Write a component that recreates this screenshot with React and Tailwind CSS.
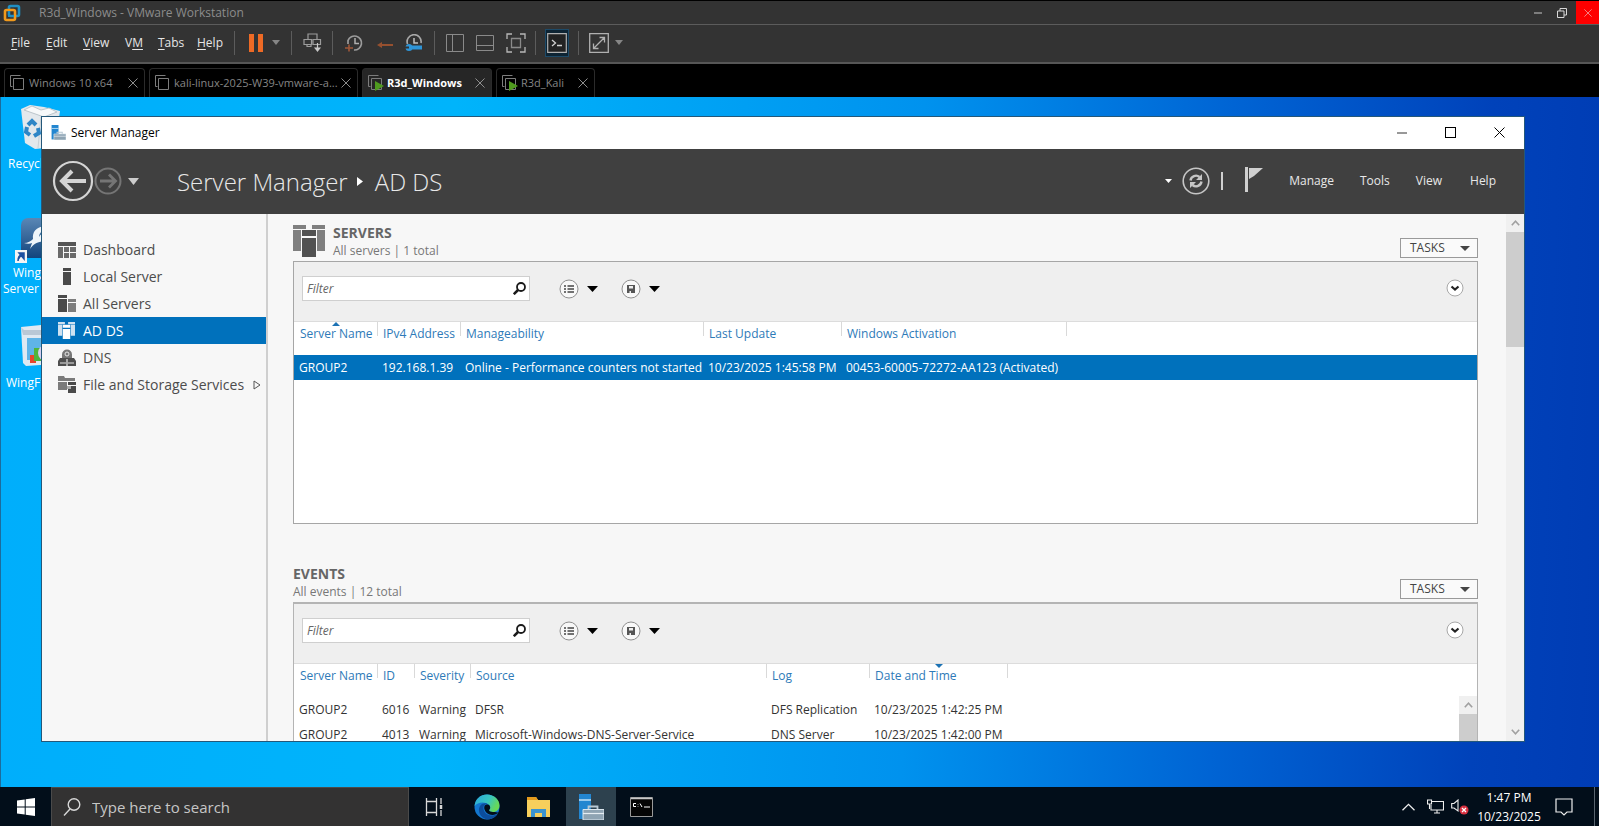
import React from 'react';

const vmMenus = [
  { id: 'file', before: '', key: 'F', after: 'ile', width: 'w-[35px]' },
  { id: 'edit', before: '', key: 'E', after: 'dit', width: 'w-[37px]' },
  { id: 'view', before: '', key: 'V', after: 'iew', width: 'w-[42px]' },
  { id: 'vm', before: 'V', key: 'M', after: '', width: 'w-[33px]' },
  { id: 'tabs', before: '', key: 'T', after: 'abs', width: 'w-[39px]' },
  { id: 'help', before: '', key: 'H', after: 'elp', width: 'w-[37px]' }
];

const vmTabs = [
  { name: 'Windows 10 x64', width: 'w-[141px]', running: false, active: false },
  { name: 'kali-linux-2025-W39-vmware-a...', width: 'w-[209px]', running: false, active: false },
  { name: 'R3d_Windows', width: 'w-[130px]', running: true, active: true },
  { name: 'R3d_Kali', width: 'w-[99px]', running: true, active: false }
];

const serverColumns = [
  { label: 'Server Name', width: 'w-[83px]', sort: 'up' },
  { label: 'IPv4 Address', width: 'w-[83px]' },
  { label: 'Manageability', width: 'w-[243px]' },
  { label: 'Last Update', width: 'w-[138px]' },
  { label: 'Windows Activation', width: 'w-[225px]' }
];

const serverRows = [
  ['GROUP2', '192.168.1.39', 'Online - Performance counters not started', '10/23/2025 1:45:58 PM', '00453-60005-72272-AA123 (Activated)']
];

const eventColumns = [
  { label: 'Server Name', width: 'w-[83px]' },
  { label: 'ID', width: 'w-[37px]' },
  { label: 'Severity', width: 'w-[56px]' },
  { label: 'Source', width: 'w-[296px]' },
  { label: 'Log', width: 'w-[103px]' },
  { label: 'Date and Time', width: 'w-[138px]', sort: 'down' }
];

const eventRows = [
  ['GROUP2', '6016', 'Warning', 'DFSR', 'DFS Replication', '10/23/2025 1:42:25 PM'],
  ['GROUP2', '4013', 'Warning', 'Microsoft-Windows-DNS-Server-Service', 'DNS Server', '10/23/2025 1:42:00 PM']
];

const Caret = ({ className, width = 10, height = 6 }) => (
  <svg className={className} width={width} height={height} viewBox="0 0 10 6" preserveAspectRatio="none" aria-hidden="true">
    <path d="M0 0h10L5 6z" fill="currentColor" />
  </svg>
);

const Cross = ({ size = 11, className }) => (
  <svg className={className} width={size} height={size} viewBox="0 0 11 11" fill="none" stroke="currentColor" aria-hidden="true">
    <path d="M.5.5l10 10M10.5.5l-10 10" />
  </svg>
);

const Chevron = ({ down, className }) => (
  <svg className={className} width="9" height="6" viewBox="0 0 9 6" fill="none" stroke="currentColor" strokeWidth="1.6" aria-hidden="true">
    <path d={down ? 'M.8.8l3.7 4 3.7-4' : 'M.8 5.2l3.7-4 3.7 4'} />
  </svg>
);

const VmwareLogo = () => (
  <svg width="18" height="18" viewBox="0 0 18 18" fill="none" strokeWidth="2.6" aria-hidden="true">
    <rect x="6" y="2" width="10" height="10" rx="1.5" stroke="#1f8fc4" />
    <rect x="2" y="6" width="10" height="10" rx="1.5" stroke="#f0991c" />
    <path d="M6 7v5h5" stroke="#1f8fc4" strokeWidth="2" />
  </svg>
);

const ServerManagerLogo = ({ size }) => (
  <svg width={size} height={size} viewBox="0 0 26 26" aria-hidden="true">
    <path d="M1 0h12v25H1z" fill="#2386d0" />
    <path d="M1 6h12" stroke="#cfe8f8" strokeWidth="1.4" />
    <path d="M5 15.5h21V26H5z" fill="#8fa4b3" stroke="#dbe6ee" strokeWidth="1" />
    <path d="M10.500 15v-2.500h9V15" fill="none" stroke="#b9c9d4" strokeWidth="1.800" />
    <path d="M5 19.500h21" stroke="#e6eef3" strokeWidth="1.200" />
  </svg>
);

const VmTitleBar = () => (
  <header className="flex h-[25px] shrink-0 items-center border-t border-black border-b border-b-[#5c5c5c] bg-[#333333] pl-[3px] text-[#8c8c8c]">
    <VmwareLogo />
    <h1 className="flex-1 pl-[18px] text-[12px] leading-4">R3d_Windows - VMware Workstation</h1>
    <button aria-label="Minimize" className="flex h-full w-6 items-center justify-center text-[#c8c8c8]">
      <svg width="8" height="2" viewBox="0 0 8 2"><path d="M0 1h8" stroke="currentColor" /></svg>
    </button>
    <button aria-label="Restore" className="mr-[2px] flex h-full w-6 items-center justify-center text-[#d8d8d8]">
      <svg width="10" height="10" viewBox="0 0 10 10" fill="none" stroke="currentColor">
        <path d="M.5 3h6.500v6.500H.5zM3 3V.5h6.500V7H7" />
      </svg>
    </button>
    <button aria-label="Close" className="flex h-full w-[23px] items-center justify-center bg-[#fe0000] text-[#f0b0b0]">
      <Cross size={8} />
    </button>
  </header>
);

const Divider = () => <span className="h-6 w-px shrink-0 bg-[#5c5c5c]" />;

const ToolButton = ({ label, className, children }) => (
  <button aria-label={label} className={`flex h-7 shrink-0 items-center justify-center ${className}`}>
    {children}
  </button>
);

const VmToolbar = () => (
  <div className="flex h-[39px] shrink-0 items-center border-b-2 border-[#565656] bg-[#333333] pb-[2px] pl-[11px]">
    <nav className="flex text-[12px] leading-5 text-[#e6e6e6]">
      {vmMenus.map((menu) => (
        <button key={menu.id} className={`text-left whitespace-nowrap ${menu.width}`}>
          {menu.before}<span className="underline underline-offset-2">{menu.key}</span>{menu.after}
        </button>
      ))}
    </nav>
    <Divider />
    <ToolButton label="Suspend" className="w-[34px] pl-2">
      <svg width="14" height="18" viewBox="0 0 14 18"><path d="M0 0h5v18H0zM9 0h5v18H9z" fill="#ee6a25" /></svg>
    </ToolButton>
    <ToolButton label="Power options" className="w-[22px] pr-2 text-[#858585]"><Caret width={8} height={5} /></ToolButton>
    <Divider />
    <ToolButton label="Send Ctrl+Alt+Del" className="w-10 pl-[2px]">
      <svg width="20" height="20" viewBox="0 0 20 20" fill="none" stroke="#9c9c9c" strokeWidth="1.200">
        <path d="M5 6V1h9v5M1 6.500h7.500v5H1zM10 6.500h7.500v5H10zM8 11.500v2H4v-2" />
        <path d="M14.500 10v6" stroke="#c8c8c8" />
        <path d="M11 14.500h7L14.500 19z" fill="#c8c8c8" stroke="none" />
      </svg>
    </ToolButton>
    <Divider />
    <ToolButton label="Take snapshot" className="w-[38px] pl-1">
      <svg width="18" height="18" viewBox="0 0 18 18" fill="none">
        <path d="M3 10V6.500A7 7 0 1 1 9 16" stroke="#9c9c9c" strokeWidth="1.700" />
        <path d="M10 4v5.500h4" stroke="#b0b0b0" strokeWidth="1.500" />
        <path d="M0 14h8M4 10.500v7" stroke="#a0583a" strokeWidth="1.600" />
      </svg>
    </ToolButton>
    <ToolButton label="Revert snapshot" className="w-[30px] pt-1 pr-[3px]">
      <svg width="16" height="8" viewBox="0 0 16 8"><path d="M4 4h12" stroke="#96502f" strokeWidth="2" /><path d="M5 1v6L0 4z" fill="#96502f" /></svg>
    </ToolButton>
    <ToolButton label="Manage snapshots" className="w-[33px] pr-2">
      <svg width="18" height="18" viewBox="0 0 18 18" fill="none">
        <path d="M2.500 10A7 7 0 1 1 16 9" stroke="#a8a8a8" strokeWidth="1.700" />
        <path d="M9 4v5h4" stroke="#c0c0c0" strokeWidth="1.500" />
        <path d="M5 13.500h12" stroke="#2e95d8" strokeWidth="4" />
        <circle cx="4" cy="13.500" r="3.500" fill="#2e95d8" />
        <path d="M0 13.500h4" stroke="#333333" strokeWidth="2" />
      </svg>
    </ToolButton>
    <Divider />
    <ToolButton label="Show library" className="w-9 pl-1">
      <svg width="18" height="18" viewBox="0 0 18 18" fill="none" stroke="#8a8a8a"><path d="M.5.5h17v17H.5zM6.500.5v17" /></svg>
    </ToolButton>
    <ToolButton label="Show thumbnail bar" className="w-[30px] pr-[2px]">
      <svg width="18" height="18" viewBox="0 0 18 18" fill="none" stroke="#8a8a8a"><path d="M.5 1.500h17v15H.5zM.5 11.500h17" /></svg>
    </ToolButton>
    <ToolButton label="Full screen" className="w-[34px] pr-[5px]">
      <svg width="20" height="20" viewBox="0 0 20 20" fill="none" stroke="#8a8a8a" strokeWidth="1.300">
        <path d="M5.500 5.500h9v9h-9z" />
        <path d="M1 6V1h5M14 1h5v5M19 14v5h-5M6 19H1v-5" stroke="#b8b8b8" />
      </svg>
    </ToolButton>
    <Divider />
    <div className="flex w-[42px] items-center justify-center">
      <ToolButton label="Console view" className="w-6 border border-[#1d4a68] bg-[#0e2433]">
        <svg width="20" height="20" viewBox="0 0 20 20" fill="none">
          <path d="M.7.700h18.600v18.600H.7z" fill="#222" stroke="#b0b0b0" strokeWidth="1.200" />
          <path d="M5 7l3.500 3L5 13M10 12.500h5" stroke="#d0d0d0" strokeWidth="1.300" />
        </svg>
      </ToolButton>
    </div>
    <Divider />
    <ToolButton label="Stretch guest" className="w-[34px] pl-[6px]">
      <svg width="20" height="20" viewBox="0 0 20 20" fill="none" stroke="#b0b0b0" strokeWidth="1.300">
        <path d="M.7.700h18.600v18.600H.7zM4.500 15.500l11-11M10.500 4.500h5v5M9.500 15.500h-5v-5" />
      </svg>
    </ToolButton>
    <ToolButton label="Stretch options" className="w-3 text-[#858585]"><Caret width={8} height={5} /></ToolButton>
  </div>
);

const VmTabs = () => (
  <div className="flex h-[33px] shrink-0 items-end gap-1 bg-black pl-1">
    {vmTabs.map((tab) => (
      <div
        key={tab.name}
        className={`flex h-[29px] items-center rounded-t border border-b-0 border-[#2b2b2b] pr-[6px] pl-[5px] ${tab.width} ${tab.active ? 'bg-[#262626] text-white' : 'text-[#858585]'}`}
      >
        <svg className="shrink-0" width="16" height="16" viewBox="0 0 16 16" fill="none" stroke="#7d7d7d" aria-hidden="true">
          <path d="M.5 11.500V.5h10M.5 11.500h2M3.500 3.500h10v11h-10z" />
          {tab.running && <path d="M7 6l9 5-9 5z" fill="#4f9a1e" stroke="none" />}
        </svg>
        <button className={`flex-1 pl-[3px] text-left text-[11px] leading-4 whitespace-nowrap ${tab.active ? 'font-bold' : ''}`}>
          {tab.name}
        </button>
        <button aria-label={`Close ${tab.name}`} className="text-[#9a9a9a]"><Cross size={10} /></button>
      </div>
    ))}
  </div>
);

const DesktopIcons = () => (
  <ul className="flex w-20 flex-col text-[12px] leading-4 whitespace-nowrap text-white">
    <li className="h-[112px] pt-2">
      <svg className="ml-5" width="40" height="44" viewBox="0 0 40 44" aria-hidden="true">
        <path d="M0 4l9-4 14 2 16 4-5 36-20 2L4 38z" fill="#e3e8ec" />
        <path d="M3 5l8-4 9 4 8-2 8 4-13 5z" fill="#f7f9fa" stroke="#bcc5cb" strokeWidth="1" />
        <path d="M20 12l-3 31" stroke="#c9d0d5" />
        <g fill="none" stroke="#2f86c6" strokeWidth="4">
          <path d="M7 20l4-4 4 4M17 23l1 5-5 3M9 30l-4-3 1-5" />
        </g>
      </svg>
      <p className="pt-[7px] pl-[7px]">Recycle Bin</p>
    </li>
    <li className="h-[108px] pt-[9px]">
      <svg className="ml-[14px]" width="46" height="46" viewBox="0 0 46 46" aria-hidden="true">
        <defs>
          <linearGradient id="wing" x1="0" y1="0" x2="0" y2="1">
            <stop offset="0" stopColor="#5a87b5" />
            <stop offset="1" stopColor="#12447c" />
          </linearGradient>
        </defs>
        <rect x="6" y="0" width="40" height="40" rx="7" fill="url(#wing)" />
        <path d="M30 8c-9 1-13 6-12 13-2 2-5 4-9 4 3 1 6 1 8 0l-2 6c4-6 9-8 15-7V14c-3 1-5 3-6 5 0-3 2-6 6-7z" fill="#eef5fa" />
        <path d="M0 32h12v13H0z" fill="#f4f4f4" />
        <path d="M3 43c0-4 1-6 4-6M4 35h5v6z" fill="#1c4fa0" stroke="#1c4fa0" strokeWidth="1.500" />
      </svg>
      <p className="pt-px pl-[12px]">Wing FTP</p>
      <p className="pl-[2px]">Server ...</p>
    </li>
    <li className="pt-[8px]">
      <svg className="ml-5" width="34" height="42" viewBox="0 0 34 42" aria-hidden="true">
        <path d="M0 2l20-2 14 3v36L5 41 2 38z" fill="#dfe9f2" />
        <path d="M0 2l3 3h31v5H2z" fill="#b9c8d6" />
        <path d="M6 13h26v22H6z" fill="#5fb4e8" />
        <path d="M9 30h6v8H9z" fill="#e8452c" />
        <path d="M13 23h7v13h-7z" fill="#4eb53c" />
        <circle cx="25" cy="28" r="8" fill="#d6cdf0" />
      </svg>
      <p className="pt-2 pl-[5px]">WingFtpServer</p>
    </li>
  </ul>
);

const ServersGlyph = ({ size, back, front }) => (
  <svg width={size} height={size} viewBox="0 0 32 32" aria-hidden="true">
    <path d="M0 0h13v4H0zM19 0h13v4H19zM0 5h8v21H0zM24 5h8v21h-8z" fill={back} />
    <path d="M9 5h14v6H9zM9 13h14v19H9z" fill={front} />
  </svg>
);

const DashboardIcon = () => (
  <svg width="18" height="18" viewBox="0 0 18 18" fill="#6a6a6a" aria-hidden="true">
    <path d="M0 1h18v4H0z" fill="#555" />
    <path d="M0 6h5v11H0zM6 6h5v5H6zM12 6h6v5h-6zM6 12h5v5H6zM12 12h6v5h-6z" />
  </svg>
);

const LocalServerIcon = () => (
  <svg width="18" height="18" viewBox="0 0 18 18" fill="#4a4a4a" aria-hidden="true">
    <path d="M5 0h8v3H5zM5 4h8v13H5z" />
  </svg>
);

const AllServersIcon = () => (
  <svg width="18" height="18" viewBox="0 0 18 18" aria-hidden="true">
    <path d="M0 0h9v3H0zM0 4h9v13H0z" fill="#4a4a4a" />
    <path d="M10 4h8v3h-8zM10 8h8v9h-8z" fill="#7d7d7d" />
  </svg>
);

const DnsIcon = () => (
  <svg width="18" height="18" viewBox="0 0 18 18" aria-hidden="true">
    <path d="M4 9V5.500a5 5 0 0 1 10 0V9z" fill="#777" />
    <circle cx="9" cy="5" r="2" fill="none" stroke="#e6e6e6" />
    <path d="M2 9h14l2 3v5H0v-5z" fill="#4f4f4f" />
    <path d="M2 14h6M10 14h6M9 10v7" stroke="#e6e6e6" strokeWidth="1.200" />
  </svg>
);

const StorageIcon = () => (
  <svg width="18" height="18" viewBox="0 0 18 18" aria-hidden="true">
    <path d="M0 0h6l1 2h10v3H0zM0 6h9v8H0z" fill="#7b7b7b" />
    <path d="M10 6h8v3h-8zM10 10h8v7h-8z" fill="#4a4a4a" />
    <path d="M9 10h4v3H9z" fill="#aaa" />
  </svg>
);

const navItems = [
  { label: 'Dashboard', icon: <DashboardIcon /> },
  { label: 'Local Server', icon: <LocalServerIcon /> },
  { label: 'All Servers', icon: <AllServersIcon /> },
  { label: 'AD DS', icon: <ServersGlyph size={17} back="#cfe2f1" front="#ffffff" />, active: true },
  { label: 'DNS', icon: <DnsIcon /> },
  { label: 'File and Storage Services', icon: <StorageIcon />, expandable: true }
];

const Sidebar = () => (
  <nav className="w-[226px] shrink-0 border-r-2 border-[#cfcfcf] bg-[#f7f7f7] pt-[22px]">
    {navItems.map((item) => (
      <a
        key={item.label}
        href="#"
        className={`flex h-[27px] items-center pl-4 text-[14px] ${item.active ? 'bg-[#0071bc] text-white' : 'text-[#4c4c4c]'}`}
      >
        <span className="flex w-[25px] shrink-0">{item.icon}</span>
        <span className="flex-1 whitespace-nowrap">{item.label}</span>
        {item.expandable && (
          <svg className="mr-[5px]" width="8" height="10" viewBox="0 0 8 10" fill="none" stroke="#555" aria-hidden="true">
            <path d="M1 1v8l6-4z" />
          </svg>
        )}
      </a>
    ))}
  </nav>
);

const ManagerHeader = () => (
  <div className="flex h-[65px] shrink-0 items-center bg-[#404040] pb-px pl-[10px] text-[#e8e8e8]">
    <button aria-label="Back">
      <svg width="42" height="42" viewBox="0 0 42 42" fill="none" stroke="#d4d4d4">
        <circle cx="21" cy="21" r="19" strokeWidth="2.200" />
        <path d="M34 21H11M20 11L10 21l10 10" strokeWidth="4" />
      </svg>
    </button>
    <button aria-label="Forward">
      <svg width="28" height="28" viewBox="0 0 28 28" fill="none" stroke="#757575">
        <circle cx="14" cy="14" r="12.500" strokeWidth="2" />
        <path d="M6 14h15M15 7.500l6.500 6.500-6.500 6.500" strokeWidth="2.800" />
      </svg>
    </button>
    <button aria-label="History" className="pl-[6px] text-[#cccccc]"><Caret width={11} height={7} /></button>
    <h2 className="flex flex-1 items-center pt-px pl-[38px] text-[24px] leading-8 font-light whitespace-nowrap">
      Server Manager
      <svg className="mr-3 ml-[9px]" width="6" height="9" viewBox="0 0 6 9" aria-hidden="true"><path d="M0 0l6 4.500L0 9z" fill="#fff" /></svg>
      AD DS
    </h2>
    <button aria-label="Refresh options" className="text-white"><Caret width={7} height={4} /></button>
    <button aria-label="Refresh" className="ml-[10px]">
      <svg width="28" height="28" viewBox="0 0 28 28" fill="none" stroke="#c6c6c6">
        <circle cx="14" cy="14" r="12.800" strokeWidth="1.600" />
        <path d="M8.500 13.500a5.500 5.500 0 0 1 9-3.500M19.500 14.500a5.500 5.500 0 0 1-9 3.500" strokeWidth="2.400" />
        <path d="M20 7v6h-6zM8 21v-6h6z" fill="#c6c6c6" stroke="none" />
      </svg>
    </button>
    <span className="ml-[11px] h-[18px] w-[2px] bg-[#d0d0d0]" />
    <button aria-label="Notifications" className="ml-[22px] pb-1">
      <svg width="18" height="25" viewBox="0 0 18 25" fill="#d0d0d0"><path d="M0 0h3v25H0zM4 1h14L9 9l-5 3z" /></svg>
    </button>
    <div className="flex gap-[26px] pr-7 pl-[26px] text-[12px] leading-5 font-medium">
      <button>Manage</button>
      <button>Tools</button>
      <button>View</button>
      <button className="pl-[2px]">Help</button>
    </div>
  </div>
);

const ScrollTrack = ({ thumb, withEnd }) => (
  <div className="flex w-[18px] shrink-0 flex-col items-center bg-[#f0f0f0]">
    <div className="flex h-[18px] shrink-0 items-center text-[#a0a0a0]"><Chevron /></div>
    <div className={`w-full bg-[#cdcdcd] ${thumb}`} />
    {withEnd && <div className="mt-auto flex h-[18px] items-center text-[#a0a0a0]"><Chevron down /></div>}
  </div>
);

const PanelToolbar = ({ name }) => (
  <div className="flex h-[60px] items-start border-b border-[#dcdcdc] bg-[#efefef] pt-[14px] pl-2">
    <label className="flex h-[25px] w-[228px] items-center border border-[#cfcfcf] bg-white">
      <input
        type="text"
        placeholder="Filter"
        aria-label={`Filter ${name}`}
        className="min-w-0 flex-1 pl-[4px] text-[12px] italic outline-none placeholder:text-[#666666]"
      />
      <svg className="mr-[3px]" width="13" height="13" viewBox="0 0 13 13" fill="none" stroke="#1a1a1a" aria-hidden="true">
        <circle cx="8" cy="5" r="4" strokeWidth="1.800" />
        <path d="M5 8L.800 12.200" strokeWidth="2.500" />
      </svg>
    </label>
    <button aria-label="Saved searches" className="mt-[3px] ml-[29px] flex items-center gap-2">
      <svg width="20" height="20" viewBox="0 0 20 20" fill="none" aria-hidden="true">
        <circle cx="10" cy="10" r="9" fill="#f8f8f8" stroke="#8f8f8f" />
        <path d="M5 7h2M5 10h2M5 13h2M8.500 7H15M8.500 10H15M8.500 13H15" stroke="#444" strokeWidth="1.600" />
      </svg>
      <Caret width={11} height={6} />
    </button>
    <button aria-label="Save search" className="mt-[3px] ml-[23px] flex items-center gap-2">
      <svg width="20" height="20" viewBox="0 0 20 20" fill="none" aria-hidden="true">
        <circle cx="10" cy="10" r="9" fill="#f8f8f8" stroke="#8f8f8f" />
        <path d="M6 6h8v8H6z" fill="#555" />
        <path d="M8 7h4v2.500H8zM8.500 12h1.500v2H8.500z" fill="#eee" />
      </svg>
      <Caret width={11} height={6} />
    </button>
    <button aria-label={`Collapse ${name}`} className="mt-[3px] mr-[13px] ml-auto">
      <svg width="18" height="18" viewBox="0 0 18 18" fill="none" aria-hidden="true">
        <circle cx="9" cy="9" r="8" fill="#fff" stroke="#a8a8a8" />
        <path d="M5.500 7.500L9 10.500l3.500-3" stroke="#222" strokeWidth="2.200" />
      </svg>
    </button>
  </div>
);

const DataTable = ({ columns, rows, selected }) => (
  <table className="w-full table-fixed border-collapse text-[12px] leading-4 whitespace-nowrap">
    <thead>
      <tr>
        {[...columns, { label: '', width: '' }].map((col, index) => (
          <th key={col.label} className={`relative h-[33px] p-0 text-left align-top font-normal text-[#2e7ab8] ${col.width}`}>
            <div className="flex">
              <span className={`h-[14px] w-px ${index > 0 ? 'bg-[#d9d9d9]' : ''}`} />
              <span className="pt-1 pl-[5px]">{col.label}</span>
            </div>
            {col.sort && (
              <Caret
                width={8}
                height={4}
                className={`absolute top-0 text-[#1c72b4] ${col.sort === 'up' ? 'left-[38px] rotate-180' : 'left-[66px]'}`}
              />
            )}
          </th>
        ))}
      </tr>
    </thead>
    <tbody>
      {rows.map((row, rowIndex) => (
        <tr key={rowIndex} className={rowIndex === selected ? 'bg-[#0071bc] text-white' : 'text-[#333333]'}>
          {row.map((cell, index) => (
            <td key={index} className="h-[25px] p-0 pl-[5px]">{cell}</td>
          ))}
          <td className="p-0" />
        </tr>
      ))}
    </tbody>
  </table>
);

const SectionHeader = ({ title, subtitle, icon }) => (
  <div className="flex h-[47px] items-end">
    {icon && <div className="mr-2 pb-1">{icon}</div>}
    <div className="flex-1 pb-px">
      <h3 className="text-[14px] leading-[18px] font-bold text-[#666666]">{title}</h3>
      <p className="text-[12px] leading-[18px] text-[#777777]">{subtitle}</p>
    </div>
    <button className="mb-[3px] flex h-5 w-[78px] items-center justify-between border border-[#9a9a9a] bg-[#fafafa] pr-[7px] pl-[9px] text-[12px] leading-4 text-[#444444]">
      TASKS
      <Caret width={10} height={5} />
    </button>
  </div>
);

const ServerManager = () => (
  <section className="absolute top-[19px] right-[74px] bottom-[45px] left-10 flex flex-col overflow-hidden border border-[#24587a] bg-[#f7f7f7]">
    <div className="flex h-8 shrink-0 items-center bg-white pb-px pl-[9px] text-black">
      <ServerManagerLogo size={15} />
      <h2 className="flex-1 pl-[5px] text-[12px] leading-4">Server Manager</h2>
      <button aria-label="Minimize" className="flex h-full w-[49px] items-center justify-center">
        <svg width="10" height="2" viewBox="0 0 10 2"><path d="M0 1h10" stroke="#333" /></svg>
      </button>
      <button aria-label="Maximize" className="flex h-full w-[49px] items-center justify-center">
        <span className="h-[11px] w-[11px] border border-black" />
      </button>
      <button aria-label="Close" className="flex h-full w-[49px] items-center justify-center"><Cross size={11} /></button>
    </div>
    <ManagerHeader />
    <div className="flex min-h-0 flex-1">
      <Sidebar />
      <main className="min-w-0 flex-1 overflow-hidden pr-7 pl-[25px]">
        <SectionHeader
          title="SERVERS"
          subtitle="All servers | 1 total"
          icon={<ServersGlyph size={32} back="#7f7f7f" front="#515151" />}
        />
        <div className="h-[263px] border border-[#a6a6a6] bg-white">
          <PanelToolbar name="servers" />
          <DataTable columns={serverColumns} rows={serverRows} selected={0} />
        </div>
        <div className="pt-[31px]">
          <SectionHeader title="EVENTS" subtitle="All events | 12 total" />
        </div>
        <div className="h-[263px] border border-t-2 border-[#b4b4b4] bg-white">
          <PanelToolbar name="events" />
          <div className="relative">
            <DataTable columns={eventColumns} rows={eventRows} />
            <div className="absolute top-[32px] right-0 flex h-[170px]">
              <ScrollTrack thumb="h-[60px]" />
            </div>
          </div>
        </div>
      </main>
      <ScrollTrack thumb="h-[115px]" withEnd />
    </div>
  </section>
);

const Taskbar = () => (
  <footer className="flex h-[39px] shrink-0 items-stretch bg-[#020e1a] text-white">
    <button aria-label="Start" className="flex w-[51px] items-center justify-center">
      <svg width="18" height="18" viewBox="0 0 18 18" fill="#fff">
        <path d="M0 2.500L7.700 1.400v7.100H0zM8.700 1.300L18 0v8.500H8.700zM0 9.500h7.700v7.100L0 15.500zM8.700 9.500H18V18l-9.300-1.300z" />
      </svg>
    </button>
    <label className="flex w-[358px] items-center border border-b-0 border-[#4a4a4a] bg-[#333232] pl-[11px]">
      <svg width="18" height="20" viewBox="0 0 18 20" fill="none" stroke="#d8d8d8" strokeWidth="1.400" aria-hidden="true">
        <circle cx="11" cy="7.500" r="5.800" />
        <path d="M7 12L1 18.500" />
      </svg>
      <input
        type="text"
        aria-label="Search"
        placeholder="Type here to search"
        className="min-w-0 flex-1 pl-[11px] text-[15px] outline-none placeholder:text-[#c6c6c6]"
      />
    </label>
    <button aria-label="Task View" className="flex w-[50px] items-center justify-center">
      <svg width="18" height="18" viewBox="0 0 18 18" fill="none" stroke="#d8d8d8" strokeWidth="1.300">
        <path d="M1.500 0v3.500h10V0M1.500 18v-3.500h10V18M1.500 3.500v11M11.500 3.500v11M16 0v6M16 12v6" />
        <path d="M16 7v4" strokeWidth="2.500" />
      </svg>
    </button>
    <button aria-label="Microsoft Edge" className="flex w-[55px] items-center justify-center">
      <svg width="26" height="26" viewBox="0 0 26 26">
        <defs>
          <linearGradient id="edgeTop" x1="0" y1="0" x2="1" y2="0.400">
            <stop offset="0" stopColor="#2aa7dc" />
            <stop offset="0.600" stopColor="#38c6c0" />
            <stop offset="1" stopColor="#67d957" />
          </linearGradient>
        </defs>
        <circle cx="13" cy="13" r="12.500" fill="#1377cf" />
        <path d="M.6 12C1 5 6.500.500 13 .5c7 0 12.500 5 12.500 11 0 4-3 6.500-6.500 6.500-2.500 0-4-1-4-2 1.500-1 1.500-3 .5-4.500C13 7.500 4 7 .600 12z" fill="url(#edgeTop)" />
        <path d="M9.500 15c-.5-3 1.500-5 4-5.500C8 8 4.500 12 5 17c.5 5 5 8.500 10 8.300 4-.3 7-2.500 8.500-5.300-5 3-13 1.500-14-5z" fill="#0c4d9c" />
        <path d="M15 16c1.500-1 1.500-3 .5-4.500-1-1.500-4-1.500-5 .5-1 3 1 7 5 8.500 3.500 1 7 0 9-2-1 .200-2.500-.5-5.500-.5-2.500 0-4-1-4-2z" fill="#020e1a" />
      </svg>
    </button>
    <button aria-label="File Explorer" className="flex w-[52px] items-center justify-center pr-[3px]">
      <svg width="23" height="20" viewBox="0 0 23 20">
        <path d="M0 0h9l2 3h12v17H0z" fill="#f7cf5c" />
        <path d="M0 0h9l2 3H0z" fill="#e49b1e" />
        <path d="M4 12h15v8h-4v-4H8v4H4z" fill="#3a93cf" />
      </svg>
    </button>
    <button aria-label="Server Manager" className="flex w-[50px] items-center justify-center bg-[#2d414e]">
      <ServerManagerLogo size={26} />
    </button>
    <button aria-label="Command Prompt" className="flex w-[50px] items-center justify-center">
      <svg width="23" height="20" viewBox="0 0 23 20" fill="none">
        <path d="M.5.500h22v19H.5z" fill="#050505" stroke="#9a9a9a" />
        <path d="M1 1.500h21" stroke="#c8c8c8" strokeWidth="1.500" />
        <path d="M6 6.500H3.500v3H6M8 7v.5M8 9v.5M10 6.500l2 3.500M14 10h6" stroke="#fff" />
      </svg>
    </button>
    <div className="ml-auto flex items-center">
      <button aria-label="Show hidden icons" className="w-[25px]">
        <svg width="13" height="8" viewBox="0 0 13 8" fill="none" stroke="#eee" strokeWidth="1.300"><path d="M.5 7.300l6-6 6 6" /></svg>
      </button>
      <button aria-label="Network" className="w-6">
        <svg width="17" height="15" viewBox="0 0 17 15" fill="none" stroke="#eee" strokeWidth="1.100">
          <path d="M5 2.500h11.500V11H4V6M7 14h6M10 11v3M.5 1h4v4h-4zM2.500 5v5" />
        </svg>
      </button>
      <button aria-label="Volume muted" className="w-[25px]">
        <svg width="18" height="16" viewBox="0 0 18 16" fill="none">
          <path d="M.7 4.500H3L7 1v11L3 9H.7z" stroke="#eee" strokeWidth="1.100" />
          <circle cx="13" cy="11" r="4.500" fill="#d93040" />
          <path d="M11 9l4 4M15 9l-4 4" stroke="#fff" strokeWidth="1.300" />
        </svg>
      </button>
      <time className="w-[66px] text-center text-[12px] leading-[19px]">1:47 PM<br />10/23/2025</time>
      <button aria-label="Action center" className="flex w-[52px] justify-center pr-[9px]">
        <svg width="18" height="18" viewBox="0 0 18 18" fill="none" stroke="#eee" strokeWidth="1.200"><path d="M1 1h16v13h-5l-3 3-3-3H1z" /></svg>
      </button>
      <span className="mr-1 h-[39px] w-px bg-[#5a6570]" />
    </div>
  </footer>
);

const App = () => (
  <div className="flex h-screen min-h-[600px] flex-col overflow-hidden bg-black font-['Open_Sans','Noto_Sans',sans-serif]">
    <VmTitleBar />
    <VmToolbar />
    <VmTabs />
    <div className="relative min-h-0 flex-1 overflow-hidden border-l border-[#1c6c9c] bg-[linear-gradient(92deg,#00aefb_0%,#00b4fb_28%,#0092ee_57%,#0064d4_76%,#0042ba_92%,#003cb4_100%)]">
      <DesktopIcons />
      <ServerManager />
    </div>
    <Taskbar />
  </div>
);

export default App;
